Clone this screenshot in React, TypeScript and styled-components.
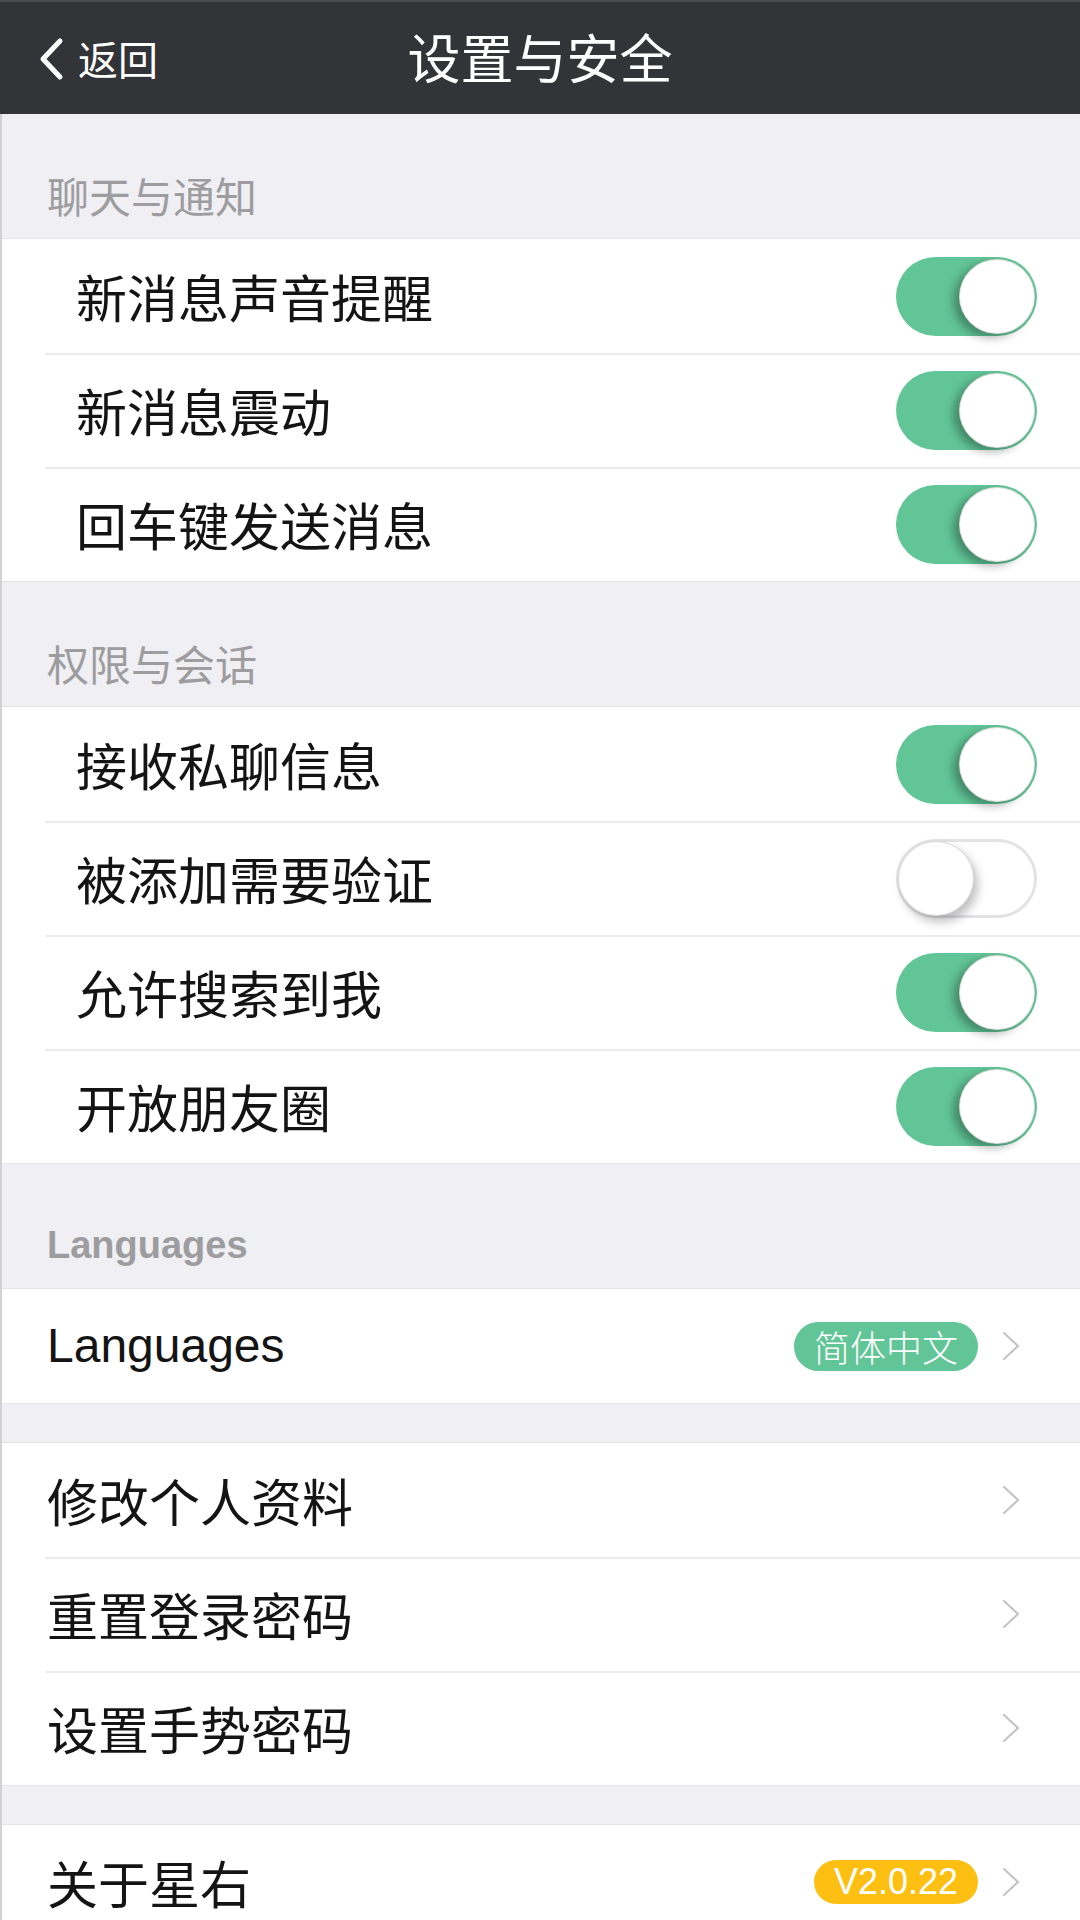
import styled, { createGlobalStyle } from "styled-components";

const GlobalStyle = createGlobalStyle`
  html, body {
    margin: 0;
    padding: 0;
    background: #efeff4;
  }
  * {
    box-sizing: border-box;
  }
`;

const cjk = `"Noto Sans CJK SC", "Noto Sans", sans-serif`;
const latin = `"Liberation Sans", "Noto Sans CJK SC", sans-serif`;

type Item = {
  label: string;
  on?: boolean;
  badge?: { text: string; tone: "green" | "yellow" };
  arrow?: boolean;
  latin?: boolean;
};

const chatItems: Item[] = [
  { label: "新消息声音提醒", on: true },
  { label: "新消息震动", on: true },
  { label: "回车键发送消息", on: true },
];

const privacyItems: Item[] = [
  { label: "接收私聊信息", on: true },
  { label: "被添加需要验证", on: false },
  { label: "允许搜索到我", on: true },
  { label: "开放朋友圈", on: true },
];

const accountItems: Item[] = [
  { label: "修改个人资料", arrow: true },
  { label: "重置登录密码", arrow: true },
  { label: "设置手势密码", arrow: true },
];

export default function App() {
  return (
    <>
      <GlobalStyle />
      <Page>
        <NavBar>
          <BackButton>
            <svg width="30" height="44" viewBox="0 0 30 44">
              <polyline
                points="24,4 7,22 24,40"
                fill="none"
                stroke="#fff"
                strokeWidth="5"
                strokeLinecap="round"
                strokeLinejoin="round"
              />
            </svg>
            <span>返回</span>
          </BackButton>
          <NavTitle>设置与安全</NavTitle>
          <div />
        </NavBar>

        <Content>
          <SectionTitle>聊天与通知</SectionTitle>
          <SettingsGroup items={chatItems} />

          <SectionTitle>权限与会话</SectionTitle>
          <SettingsGroup items={privacyItems} />

          <SectionTitle $latin>Languages</SectionTitle>
          <SettingsGroup
            items={[
              {
                label: "Languages",
                latin: true,
                arrow: true,
                badge: { text: "简体中文", tone: "green" },
              },
            ]}
          />

          <GroupGap />
          <SettingsGroup items={accountItems} />

          <GroupGap />
          <SettingsGroup
            items={[
              {
                label: "关于星右",
                arrow: true,
                badge: { text: "V2.0.22", tone: "yellow" },
              },
            ]}
          />
        </Content>
      </Page>
    </>
  );
}

const SettingsGroup = ({ items }: { items: Item[] }) => (
  <Group>
    {items.map((item) => {
      const isSwitch = item.on !== undefined;
      return (
        <Row key={item.label} $switch={isSwitch}>
          <Label $latin={item.latin}>{item.label}</Label>
          {isSwitch && (
            <Toggle $on={!!item.on}>
              <Knob $on={!!item.on} />
            </Toggle>
          )}
          {item.badge && <Badge $tone={item.badge.tone}>{item.badge.text}</Badge>}
          {item.arrow && <Chevron />}
        </Row>
      );
    })}
  </Group>
);

const Chevron = () => (
  <ChevronIcon width="20" height="30" viewBox="0 0 20 30">
    <polyline
      points="3,2 17,15 3,28"
      fill="none"
      stroke="#c4c4c8"
      strokeWidth="2.2"
      strokeLinecap="round"
      strokeLinejoin="round"
    />
  </ChevronIcon>
);

const Page = styled.div`
  width: 1080px;
  height: 1920px;
  overflow: hidden;
  background: #efeff4;
`;

const NavBar = styled.header`
  height: 114px;
  background: #333438;
  border-top: 2px solid #4a4b50;
  display: grid;
  grid-template-columns: 1fr auto 1fr;
  align-items: center;
`;

const BackButton = styled.div`
  display: flex;
  align-items: center;
  gap: 12px;
  padding-left: 36px;
  color: #fff;
  font-family: ${cjk};
  font-size: 40px;
  line-height: 1;

  svg {
    margin-top: 2px;
  }
`;

const NavTitle = styled.h1`
  margin: 0 0 4px;
  color: #fff;
  font-family: ${cjk};
  font-size: 53px;
  font-weight: 400;
  line-height: 1;
`;

const Content = styled.div`
  border-left: 2px solid #d2d2d6;
`;

const SectionTitle = styled.div<{ $latin?: boolean }>`
  height: 124px;
  padding: 56px 0 0 45px;
  font-family: ${(p) => (p.$latin ? latin : cjk)};
  font-size: ${(p) => (p.$latin ? "38px" : "42px")};
  font-weight: ${(p) => (p.$latin ? 700 : 400)};
  line-height: 50px;
  color: #9d9d9f;
`;

const Group = styled.div`
  background: #fff;
  border-top: 1px solid #e4e4e8;
  border-bottom: 1px solid #e4e4e8;
`;

const GroupGap = styled.div`
  height: 38px;
`;

const Row = styled.div<{ $switch: boolean }>`
  position: relative;
  height: 114px;
  display: flex;
  align-items: center;
  padding: ${(p) => (p.$switch ? "0 43px 0 74px" : "0 59px 0 45px")};

  & + &::before {
    content: "";
    position: absolute;
    top: 0;
    left: 43px;
    right: 0;
    height: 2px;
    background: #ececef;
  }
`;

const Label = styled.span<{ $latin?: boolean }>`
  flex: 1;
  font-family: ${(p) => (p.$latin ? latin : cjk)};
  font-size: ${(p) => (p.$latin ? "48px" : "51px")};
  line-height: 1;
  color: #141414;
  white-space: nowrap;
`;

const Toggle = styled.span<{ $on: boolean }>`
  position: relative;
  width: 141px;
  height: 79px;
  border-radius: 40px;
  background: ${(p) => (p.$on ? "#61c597" : "#fff")};
  border: ${(p) => (p.$on ? "none" : "3px solid #e3e3e6")};
  flex-shrink: 0;
`;

const Knob = styled.span<{ $on: boolean }>`
  position: absolute;
  top: ${(p) => (p.$on ? "2px" : "-1px")};
  ${(p) => (p.$on ? "right: 2px;" : "left: -1px;")}
  width: 76px;
  height: 75px;
  border-radius: 50%;
  background: #fff;
  border: 1px solid rgba(0, 0, 0, 0.14);
  box-shadow: ${(p) =>
    p.$on
      ? "-6px 4px 9px rgba(0, 0, 0, 0.3)"
      : "4px 6px 10px rgba(0, 0, 0, 0.25)"};
`;

const Badge = styled.span<{ $tone: "green" | "yellow" }>`
  display: inline-flex;
  align-items: center;
  justify-content: center;
  height: ${(p) => (p.$tone === "green" ? "49px" : "44px")};
  padding: 0 20px;
  min-width: ${(p) => (p.$tone === "green" ? "182px" : "162px")};
  border-radius: 25px;
  background: ${(p) => (p.$tone === "green" ? "#61c597" : "#fdbf12")};
  color: #fff;
  font-family: ${(p) => (p.$tone === "green" ? cjk : latin)};
  font-size: ${(p) => (p.$tone === "green" ? "36px" : "36px")};
  font-weight: 300;
  line-height: 1;
  margin-right: 23px;
`;

const ChevronIcon = styled.svg`
  flex-shrink: 0;
`;
